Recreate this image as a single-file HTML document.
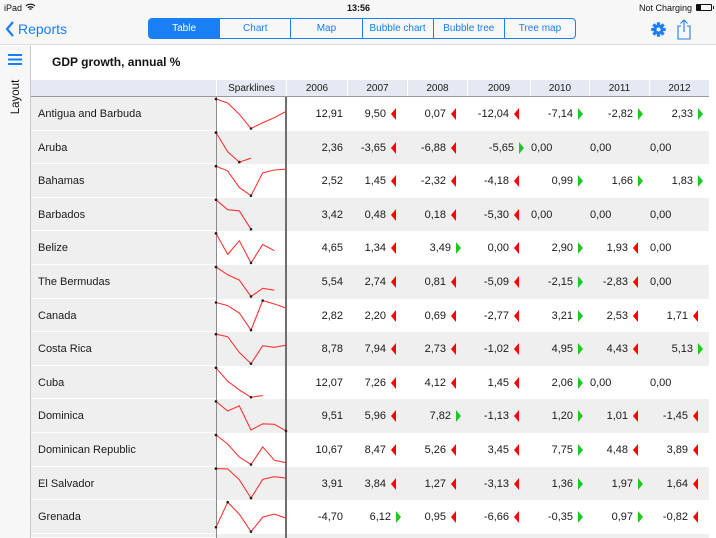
<!DOCTYPE html>
<html><head><meta charset="utf-8">
<style>
*{margin:0;padding:0;box-sizing:border-box}
html,body{width:716px;height:538px;overflow:hidden}
body{background:#fff;font-family:"Liberation Sans",Arial,sans-serif;color:#1a1a1a;position:relative}
.abs{position:absolute}
#nav{left:0;top:0;width:716px;height:45px;background:#f7f7f7;border-bottom:1px solid #dcdcdc}
.st{font-size:9px;top:3px;color:#111}
#seg{left:148px;top:18px;width:428px;height:21px;border:1px solid #1a7ef5;border-radius:4px;display:flex;overflow:hidden}
#seg div{flex:1;border-left:1px solid #1a7ef5;color:#1a7ef5;font-size:10px;text-align:center;line-height:19px}
#seg div:first-child{border-left:none;background:#1a7ef5;color:#fff}
#side{left:0;top:46px;width:31px;height:492px;background:#f7f7f7;border-right:1px solid #c8c8c8}
#title{left:52px;top:55px;font-size:12px;font-weight:bold;color:#111}
#hdr{left:31px;top:80px;width:678px;height:17px;background:#e5e9f3;border-bottom:1px solid #9a9a9a;font-size:10px}
#hdr div{position:absolute;top:0;height:16px;line-height:17px;text-align:center;border-left:1px solid #fff}
.row{position:absolute;left:31px;width:678px;height:33.6px;font-size:11px;overflow:hidden}
.row.g{background:#efefef}
.row .n{position:absolute;left:0;top:0;width:185px;height:100%;background:#efefef;border-bottom:1px solid #fff;padding-left:7px;line-height:35px}
.row .c{position:absolute;top:0;height:100%;line-height:35px;text-align:right;white-space:nowrap}
.row .m{text-align:left;padding-left:1px}
.r,.gr{display:inline-block;width:0;height:0;border-top:6.5px solid transparent;border-bottom:6.5px solid transparent;vertical-align:-3px;margin-left:5px}
.r{border-right:5px solid #f00}
.gr{border-left:5px solid #1fc81f}
.cr{padding-right:11px}.cg{padding-right:6px}
#sl{left:216px;top:97px;width:71px;height:441px;border-left:1px solid #8a8a8a;border-right:2px solid #6e6e6e}
</style></head><body>
<div id="nav" class="abs"></div>
<div class="abs st" style="left:4px">iPad <svg width="11" height="8" viewBox="0 0 11 8" style="vertical-align:0"><path d="M1 3a6.5 6.5 0 0 1 9 0M2.8 4.8a4 4 0 0 1 5.4 0M4.4 6.4a1.5 1.5 0 0 1 2.2 0" stroke="#111" stroke-width="1.2" fill="none"/></svg></div>
<div class="abs st" style="left:347px;font-weight:bold">13:56</div>
<div class="abs st" style="left:639px">Not Charging</div>
<div class="abs" style="left:696px;top:4px;width:16px;height:7px;border:1px solid #111;border-radius:1px"><div style="width:4px;height:5px;background:#111"></div></div>
<div class="abs" style="left:713px;top:6px;width:1px;height:3px;background:#111"></div>
<svg class="abs" style="left:5px;top:21px" width="10" height="16"><path d="M8 1L2 8l6 7" stroke="#1a7ef5" stroke-width="2.2" fill="none"/></svg>
<div class="abs" style="left:18px;top:21px;font-size:14px;color:#1a7ef5">Reports</div>
<div id="seg" class="abs"><div>Table</div><div>Chart</div><div>Map</div><div>Bubble chart</div><div>Bubble tree</div><div>Tree map</div></div>
<svg class="abs" style="left:651px;top:22px" width="15" height="15" viewBox="-7.5 -7.5 15 15"><g fill="#1a7ef5"><circle r="5"/><rect x="-1.6" y="-7.2" width="3.2" height="14.4"/><rect x="-1.6" y="-7.2" width="3.2" height="14.4" transform="rotate(45)"/><rect x="-1.6" y="-7.2" width="3.2" height="14.4" transform="rotate(90)"/><rect x="-1.6" y="-7.2" width="3.2" height="14.4" transform="rotate(135)"/></g><circle r="2" fill="#f7f7f7"/></svg>
<svg class="abs" style="left:676px;top:18px" width="16" height="22"><path d="M5 8H2v13h12V8h-3M8 14V2M4.5 5.5L8 2l3.5 3.5" stroke="#1a7ef5" stroke-width="1.1" fill="none"/></svg>
<div id="side" class="abs"></div>
<div class="abs" style="left:8px;top:54px;width:14px;height:2.4px;background:#1a7ef5;box-shadow:0 4.5px 0 #1a7ef5,0 9px 0 #1a7ef5"></div>
<div class="abs" style="left:-8px;top:91px;width:48px;font-size:11.5px;transform:rotate(-90deg);text-align:center;color:#111">Layout</div>
<div id="title" class="abs">GDP growth, annual %</div>
<div id="hdr" class="abs">
<div style="left:0;width:185px;border-left:none"></div>
<div style="left:185px;width:70px">Sparklines</div>
<div style="left:255px;width:61px">2006</div>
<div style="left:316px;width:60px">2007</div>
<div style="left:376px;width:60px">2008</div>
<div style="left:436px;width:63px">2009</div>
<div style="left:499px;width:59px">2010</div>
<div style="left:558px;width:60px">2011</div>
<div style="left:618px;width:60px">2012</div>
</div>
<div class="row" style="top:97px"><div class="n">Antigua and Barbuda</div><div class="c" style="left:255px;width:61px;padding-right:4px">12,91</div><div class="c cr" style="left:316px;width:60px">9,50<i class="r"></i></div><div class="c cr" style="left:376px;width:60px">0,07<i class="r"></i></div><div class="c cr" style="left:436px;width:63px">-12,04<i class="r"></i></div><div class="c cg" style="left:499px;width:59px">-7,14<i class="gr"></i></div><div class="c cg" style="left:558px;width:60px">-2,82<i class="gr"></i></div><div class="c cg" style="left:618px;width:60px">2,33<i class="gr"></i></div></div>
<div class="row g" style="top:130.6px"><div class="n">Aruba</div><div class="c" style="left:255px;width:61px;padding-right:4px">2,36</div><div class="c cr" style="left:316px;width:60px">-3,65<i class="r"></i></div><div class="c cr" style="left:376px;width:60px">-6,88<i class="r"></i></div><div class="c cg" style="left:436px;width:63px">-5,65<i class="gr"></i></div><div class="c m" style="left:499px;width:59px">0,00</div><div class="c m" style="left:558px;width:60px">0,00</div><div class="c m" style="left:618px;width:60px">0,00</div></div>
<div class="row" style="top:164.2px"><div class="n">Bahamas</div><div class="c" style="left:255px;width:61px;padding-right:4px">2,52</div><div class="c cr" style="left:316px;width:60px">1,45<i class="r"></i></div><div class="c cr" style="left:376px;width:60px">-2,32<i class="r"></i></div><div class="c cr" style="left:436px;width:63px">-4,18<i class="r"></i></div><div class="c cg" style="left:499px;width:59px">0,99<i class="gr"></i></div><div class="c cg" style="left:558px;width:60px">1,66<i class="gr"></i></div><div class="c cg" style="left:618px;width:60px">1,83<i class="gr"></i></div></div>
<div class="row g" style="top:197.8px"><div class="n">Barbados</div><div class="c" style="left:255px;width:61px;padding-right:4px">3,42</div><div class="c cr" style="left:316px;width:60px">0,48<i class="r"></i></div><div class="c cr" style="left:376px;width:60px">0,18<i class="r"></i></div><div class="c cr" style="left:436px;width:63px">-5,30<i class="r"></i></div><div class="c m" style="left:499px;width:59px">0,00</div><div class="c m" style="left:558px;width:60px">0,00</div><div class="c m" style="left:618px;width:60px">0,00</div></div>
<div class="row" style="top:231.4px"><div class="n">Belize</div><div class="c" style="left:255px;width:61px;padding-right:4px">4,65</div><div class="c cr" style="left:316px;width:60px">1,34<i class="r"></i></div><div class="c cg" style="left:376px;width:60px">3,49<i class="gr"></i></div><div class="c cr" style="left:436px;width:63px">0,00<i class="r"></i></div><div class="c cg" style="left:499px;width:59px">2,90<i class="gr"></i></div><div class="c cr" style="left:558px;width:60px">1,93<i class="r"></i></div><div class="c m" style="left:618px;width:60px">0,00</div></div>
<div class="row g" style="top:265px"><div class="n">The Bermudas</div><div class="c" style="left:255px;width:61px;padding-right:4px">5,54</div><div class="c cr" style="left:316px;width:60px">2,74<i class="r"></i></div><div class="c cr" style="left:376px;width:60px">0,81<i class="r"></i></div><div class="c cr" style="left:436px;width:63px">-5,09<i class="r"></i></div><div class="c cg" style="left:499px;width:59px">-2,15<i class="gr"></i></div><div class="c cr" style="left:558px;width:60px">-2,83<i class="r"></i></div><div class="c m" style="left:618px;width:60px">0,00</div></div>
<div class="row" style="top:298.6px"><div class="n">Canada</div><div class="c" style="left:255px;width:61px;padding-right:4px">2,82</div><div class="c cr" style="left:316px;width:60px">2,20<i class="r"></i></div><div class="c cr" style="left:376px;width:60px">0,69<i class="r"></i></div><div class="c cr" style="left:436px;width:63px">-2,77<i class="r"></i></div><div class="c cg" style="left:499px;width:59px">3,21<i class="gr"></i></div><div class="c cr" style="left:558px;width:60px">2,53<i class="r"></i></div><div class="c cr" style="left:618px;width:60px">1,71<i class="r"></i></div></div>
<div class="row g" style="top:332.2px"><div class="n">Costa Rica</div><div class="c" style="left:255px;width:61px;padding-right:4px">8,78</div><div class="c cr" style="left:316px;width:60px">7,94<i class="r"></i></div><div class="c cr" style="left:376px;width:60px">2,73<i class="r"></i></div><div class="c cr" style="left:436px;width:63px">-1,02<i class="r"></i></div><div class="c cg" style="left:499px;width:59px">4,95<i class="gr"></i></div><div class="c cr" style="left:558px;width:60px">4,43<i class="r"></i></div><div class="c cg" style="left:618px;width:60px">5,13<i class="gr"></i></div></div>
<div class="row" style="top:365.8px"><div class="n">Cuba</div><div class="c" style="left:255px;width:61px;padding-right:4px">12,07</div><div class="c cr" style="left:316px;width:60px">7,26<i class="r"></i></div><div class="c cr" style="left:376px;width:60px">4,12<i class="r"></i></div><div class="c cr" style="left:436px;width:63px">1,45<i class="r"></i></div><div class="c cg" style="left:499px;width:59px">2,06<i class="gr"></i></div><div class="c m" style="left:558px;width:60px">0,00</div><div class="c m" style="left:618px;width:60px">0,00</div></div>
<div class="row g" style="top:399.4px"><div class="n">Dominica</div><div class="c" style="left:255px;width:61px;padding-right:4px">9,51</div><div class="c cr" style="left:316px;width:60px">5,96<i class="r"></i></div><div class="c cg" style="left:376px;width:60px">7,82<i class="gr"></i></div><div class="c cr" style="left:436px;width:63px">-1,13<i class="r"></i></div><div class="c cg" style="left:499px;width:59px">1,20<i class="gr"></i></div><div class="c cr" style="left:558px;width:60px">1,01<i class="r"></i></div><div class="c cr" style="left:618px;width:60px">-1,45<i class="r"></i></div></div>
<div class="row" style="top:433px"><div class="n">Dominican Republic</div><div class="c" style="left:255px;width:61px;padding-right:4px">10,67</div><div class="c cr" style="left:316px;width:60px">8,47<i class="r"></i></div><div class="c cr" style="left:376px;width:60px">5,26<i class="r"></i></div><div class="c cr" style="left:436px;width:63px">3,45<i class="r"></i></div><div class="c cg" style="left:499px;width:59px">7,75<i class="gr"></i></div><div class="c cr" style="left:558px;width:60px">4,48<i class="r"></i></div><div class="c cr" style="left:618px;width:60px">3,89<i class="r"></i></div></div>
<div class="row g" style="top:466.6px"><div class="n">El Salvador</div><div class="c" style="left:255px;width:61px;padding-right:4px">3,91</div><div class="c cr" style="left:316px;width:60px">3,84<i class="r"></i></div><div class="c cr" style="left:376px;width:60px">1,27<i class="r"></i></div><div class="c cr" style="left:436px;width:63px">-3,13<i class="r"></i></div><div class="c cg" style="left:499px;width:59px">1,36<i class="gr"></i></div><div class="c cg" style="left:558px;width:60px">1,97<i class="gr"></i></div><div class="c cr" style="left:618px;width:60px">1,64<i class="r"></i></div></div>
<div class="row" style="top:500.2px"><div class="n">Grenada</div><div class="c" style="left:255px;width:61px;padding-right:4px">-4,70</div><div class="c cg" style="left:316px;width:60px">6,12<i class="gr"></i></div><div class="c cr" style="left:376px;width:60px">0,95<i class="r"></i></div><div class="c cr" style="left:436px;width:63px">-6,66<i class="r"></i></div><div class="c cg" style="left:499px;width:59px">-0,35<i class="gr"></i></div><div class="c cg" style="left:558px;width:60px">0,97<i class="gr"></i></div><div class="c cr" style="left:618px;width:60px">-0,82<i class="r"></i></div></div>
<div class="row g" style="top:534px;height:4px"><div class="n"></div></div>
<div id="sl" class="abs"></div>
<svg id="sp" class="abs" style="left:0;top:0" width="716" height="538"></svg>
<script>
var D=[[12.91,9.5,0.07,-12.04,-7.14,-2.82,2.33],[2.36,-3.65,-6.88,-5.65],[2.52,1.45,-2.32,-4.18,0.99,1.66,1.83],[3.42,0.48,0.18,-5.30],[4.65,1.34,3.49,0,2.9,1.93],[5.54,2.74,0.81,-5.09,-2.15,-2.83],[2.82,2.2,0.69,-2.77,3.21,2.53,1.71],[8.78,7.94,2.73,-1.02,4.95,4.43,5.13],[12.07,7.26,4.12,1.45,2.06],[9.51,5.96,7.82,-1.13,1.2,1.01,-1.45],[10.67,8.47,5.26,3.45,7.75,4.48,3.89],[3.91,3.84,1.27,-3.13,1.36,1.97,1.64],[-4.7,6.12,0.95,-6.66,-0.35,0.97,-0.82]];
var s='';
D.forEach(function(v,i){var top=97+i*33.6,mn=Math.min.apply(0,v),mx=Math.max.apply(0,v);var p=v.map(function(x,j){return [216+j*11.67,top+2+(mx-x)/(mx-mn)*29.5]});
s+='<polyline points="'+p.map(function(q){return q[0].toFixed(1)+','+q[1].toFixed(1)}).join(' ')+'" fill="none" stroke="#f33" stroke-width="1.1"/>';
[0,v.indexOf(mn),v.indexOf(mx)].forEach(function(k){s+='<circle cx="'+p[k][0].toFixed(1)+'" cy="'+p[k][1].toFixed(1)+'" r="1.3" fill="#222"/>'});});
document.getElementById('sp').innerHTML=s;
</script>
</body></html>
